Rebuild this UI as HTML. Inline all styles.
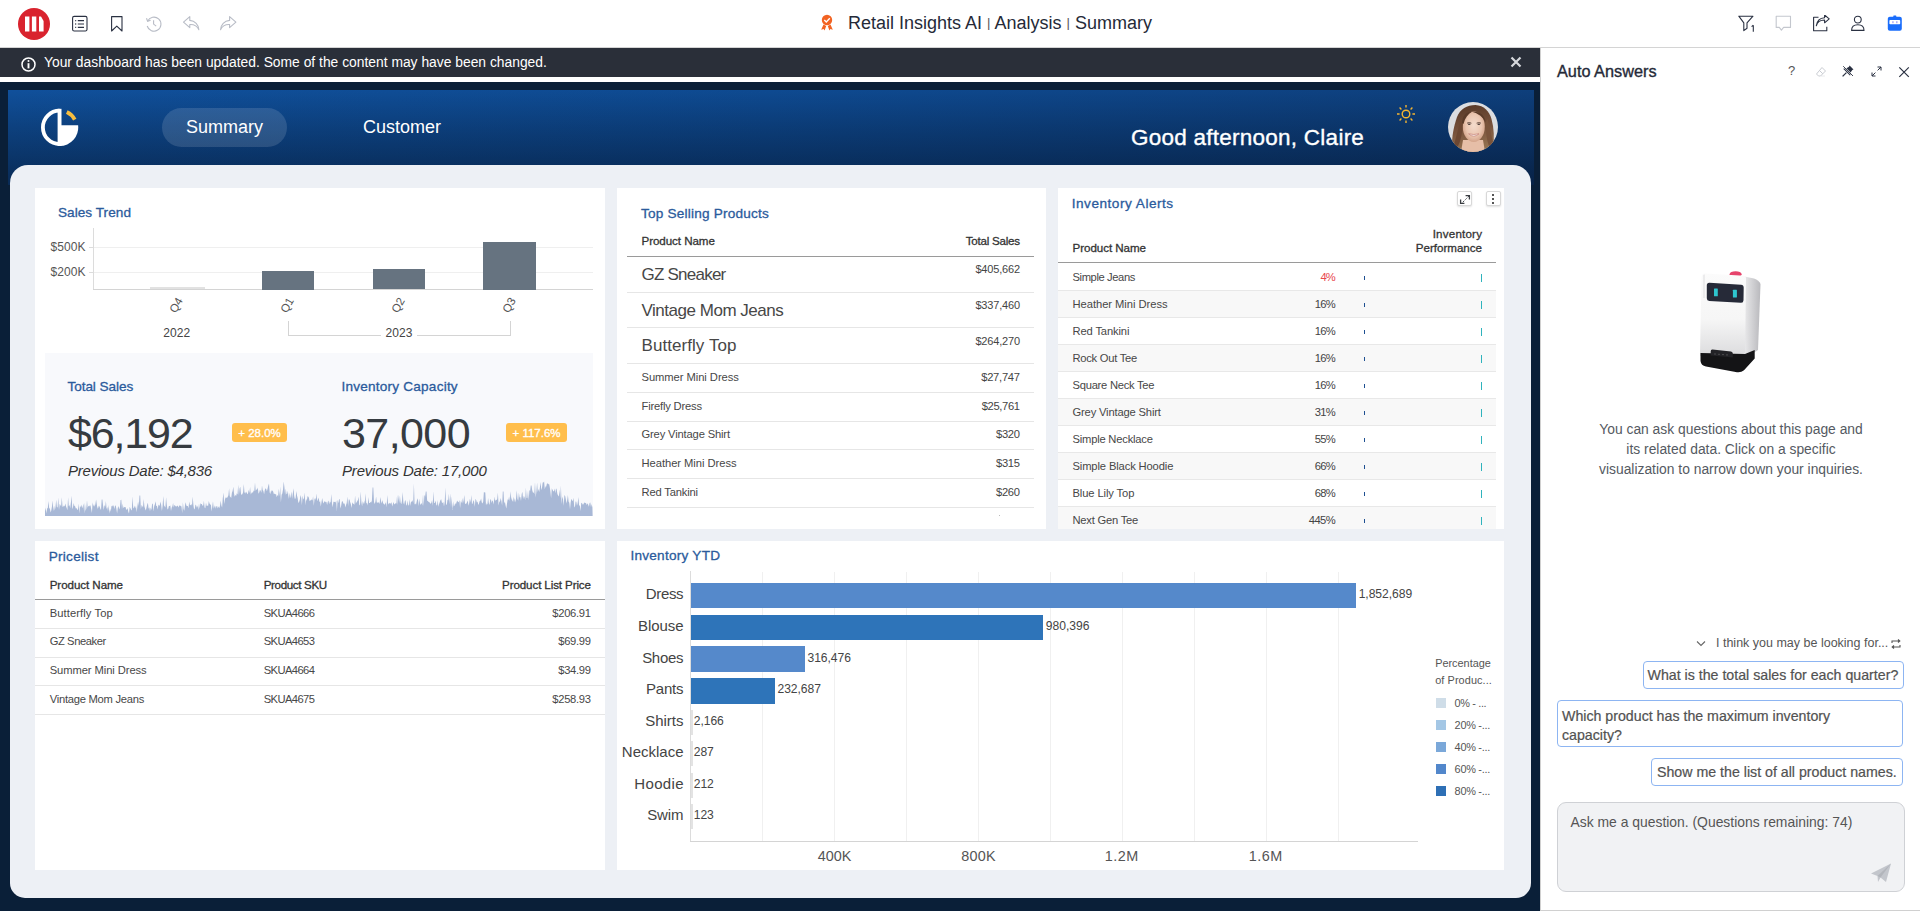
<!DOCTYPE html>
<html><head><meta charset="utf-8">
<style>
*{box-sizing:border-box;margin:0;padding:0}
html,body{width:1920px;height:911px;overflow:hidden;background:#fff;font-family:"Liberation Sans",sans-serif;color:#333}
.abs{position:absolute}
#toolbar{position:absolute;left:0;top:0;width:1920px;height:48px;background:#fff;border-bottom:1px solid #d4d4d4}
#notif{position:absolute;left:0;top:48px;width:1540px;height:29px;background:#2a2f39;color:#fff;font-size:13.85px}
#frame{position:absolute;left:0;top:82px;width:1540px;height:829px;background:#0a1f38}
#hdr{position:absolute;left:8px;top:90px;width:1526px;height:95px;background:linear-gradient(to bottom,rgba(2,8,22,0) 0%,rgba(2,8,22,0.22) 40%,rgba(2,8,22,0.52) 100%),linear-gradient(to right,#10509b 0%,#0e4a91 50%,#0e3f7c 100%)}
#panel{position:absolute;left:10px;top:165px;width:1521px;height:733px;background:#edf0f5;border-radius:18px 18px 15px 15px}
.card{position:absolute;background:#fff;border-radius:2px}
.ttl{position:absolute;font-size:13px;font-weight:700;color:#2b5b9c;white-space:nowrap}
.t{position:absolute;white-space:nowrap}
#rp{position:absolute;left:1540px;top:48px;width:380px;height:863px;background:#fff;border-left:1px solid #d0d0d0;border-bottom:1px solid #d0d0d0}
</style></head><body>
<div id="toolbar">
  <!-- logo -->
  <svg class="abs" style="left:18px;top:8px" width="32" height="32" viewBox="0 0 32 32">
    <circle cx="16" cy="16" r="16" fill="#d9232e"/>
    <rect x="7" y="8.5" width="4.4" height="15" fill="#fff"/>
    <rect x="13.9" y="8.5" width="4.4" height="15" fill="#fff"/>
    <path d="M21 8.5 L23 8.5 L25.6 13 L25.6 23.5 L21 23.5 Z" fill="#fff"/>
  </svg>
  <!-- list icon -->
  <svg class="abs" style="left:71px;top:15px" width="18" height="18" viewBox="0 0 18 18" fill="none" stroke="#2a3142" stroke-width="1.1">
    <rect x="1.6" y="1.4" width="14.4" height="14.6" rx="1.6"/>
    <path d="M6.8 5.6h6.2M6.8 9h6.2M6.8 12.4h6.2"/>
    <path d="M4.2 5.6h1M4.2 9h1M4.2 12.4h1" stroke-width="1.4"/>
  </svg>
  <!-- bookmark -->
  <svg class="abs" style="left:109px;top:15px" width="16" height="18" viewBox="0 0 16 18" fill="none" stroke="#2a3142" stroke-width="1.1" stroke-linejoin="round">
    <path d="M2.6 1.6h10.4v14.4l-5.2-4.9-5.2 4.9z"/>
  </svg>
  <!-- history -->
  <svg class="abs" style="left:145px;top:15px" width="18" height="18" viewBox="0 0 18 18" fill="none" stroke="#b8bcc6" stroke-width="1.1">
    <path d="M2.6 6.2A7 7 0 1 1 2.2 11"/>
    <path d="M1.5 3.2l1.1 3 3-.9"/>
    <path d="M8.6 5.2v3.9l2.6 2"/>
  </svg>
  <!-- undo -->
  <svg class="abs" style="left:182px;top:15px" width="19" height="18" viewBox="0 0 19 18" fill="none" stroke="#b8bcc6" stroke-width="1.1" stroke-linejoin="round">
    <path d="M7.8 1.6 L1.5 7.2 L7.8 12.6 V9.5 C12.2 9.3 15.2 10.8 16.9 14.8 C16.6 9.6 13 5.8 7.8 5.4 Z"/>
  </svg>
  <!-- redo -->
  <svg class="abs" style="left:218px;top:15px" width="19" height="18" viewBox="0 0 19 18" fill="none" stroke="#b8bcc6" stroke-width="1.1" stroke-linejoin="round">
    <path d="M11.6 1.6 L17.9 7.2 L11.6 12.6 V9.5 C7.2 9.3 4.2 10.8 2.5 14.8 C2.8 9.6 6.4 5.8 11.6 5.4 Z"/>
  </svg>
  <!-- title -->
  <svg class="abs" style="left:820px;top:14px" width="14" height="17" viewBox="0 0 14 17">
    <circle cx="7" cy="6" r="5.2" fill="#f26322"/>
    <path d="M4.3 5.9l2 2 3.5-3.6" fill="none" stroke="#fff" stroke-width="1.4"/>
    <path d="M3.5 10.5 L1.2 15.8 L3.6 15 L4.6 16.6 L6.2 12 Z M10.5 10.5 L12.8 15.8 L10.4 15 L9.4 16.6 L7.8 12 Z" fill="#f26322"/>
  </svg>
  <div class="t" style="left:848px;top:13px;font-size:18px;color:#252a38;letter-spacing:0">Retail Insights AI <span style="font-size:13px;position:relative;top:-2px;color:#555">|</span> Analysis <span style="font-size:13px;position:relative;top:-2px;color:#555">|</span> Summary</div>
  <!-- right icons -->
  <svg class="abs" style="left:1737px;top:15px" width="19" height="18" viewBox="0 0 19 18" fill="none" stroke="#2a3142" stroke-width="1.1" stroke-linejoin="round">
    <path d="M1.8 1.2h14.2l-6 6.6v5.4l-3.2 2.4V7.8z"/>
    <path d="M16.3 10.2v6.6M14.6 11.6l1.7-1.4" stroke-width="1.1"/>
  </svg>
  <svg class="abs" style="left:1775px;top:15px" width="17" height="17" viewBox="0 0 17 17" fill="none" stroke="#c4c7ce" stroke-width="1.1" stroke-linejoin="round">
    <path d="M1.2 1.2h14.3v11.2H8.6l-2.2 2.8-2.1-2.8H1.2z"/>
  </svg>
  <svg class="abs" style="left:1812px;top:15px" width="19" height="17" viewBox="0 0 19 17" fill="none" stroke="#2a3142" stroke-width="1.1" stroke-linejoin="round">
    <path d="M6.5 2.2H1.6v13.6h13.2v-4"/>
    <path d="M4.3 10.8c1-3.8 4.2-5.8 8.3-5.8V7.8l4.6-4-4.6-3.8v2.8C8.2 3 5 6 4.3 10.8z"/>
  </svg>
  <svg class="abs" style="left:1850px;top:15px" width="16" height="17" viewBox="0 0 16 17" fill="none" stroke="#2a3142" stroke-width="1.1">
    <circle cx="7.8" cy="4.6" r="3.4"/>
    <path d="M1.6 15.4c0-3.6 2.6-5.6 6.2-5.6s6.2 2 6.2 5.6z" stroke-linejoin="round"/>
  </svg>
  <svg class="abs" style="left:1887px;top:15px" width="16" height="17" viewBox="0 0 16 17">
    <rect x="0.8" y="1.8" width="14" height="14" rx="2" fill="#1a6dfb"/>
    <rect x="6.3" y="0.6" width="3" height="2" rx="0.5" fill="#1a6dfb"/>
    <rect x="2.4" y="5" width="10.8" height="4.2" rx="0.8" fill="#fff"/>
    <rect x="5.4" y="6.2" width="1.1" height="2" fill="#8f8ff5"/>
    <rect x="9.3" y="6.2" width="1.1" height="2" fill="#8f8ff5"/>
  </svg>
</div>

<div id="notif">
  <svg class="abs" style="left:21px;top:8.5px" width="15" height="15" viewBox="0 0 15 15" fill="none" stroke="#fff" stroke-width="1.5">
    <circle cx="7.5" cy="7.5" r="6.5"/>
    <path d="M7.5 6.2v5.2" stroke-width="1.9"/>
    <circle cx="7.5" cy="3.9" r="1" fill="#fff" stroke="none"/>
  </svg>
  <div class="t" style="left:44px;top:6px">Your dashboard has been updated. Some of the content may have been changed.</div>
  <svg class="abs" style="left:1510px;top:8px" width="12" height="12" viewBox="0 0 12 12" stroke="#d6d8dc" stroke-width="2.2">
    <path d="M1.5 1.5l9 9M10.5 1.5l-9 9"/>
  </svg>
</div>

<div id="frame"></div>
<div id="hdr"></div>
<div id="panel"></div>

<!-- header content -->
<svg class="abs" style="left:40px;top:107px" width="40" height="40" viewBox="0 0 40 40">
  <path d="M19.6 3.7 A16.7 16.7 0 0 0 19.6 37.1" fill="none" stroke="#fff" stroke-width="3.8"/>
  <rect x="17.6" y="1.8" width="3.9" height="37.2" fill="#fff"/>
  <path d="M21.5 18.2 H38.1 A18.6 18.6 0 0 1 19.6 39 V18.2 Z" fill="#fff"/>
  <path d="M26.8 5.0 A17 17 0 0 1 34.75 12.7" fill="none" stroke="#f7bd3f" stroke-width="3.8"/>
</svg>
<div class="abs" style="left:162px;top:108px;width:125px;height:39px;border-radius:20px;background:rgba(255,255,255,0.13)"></div>
<div class="t" style="left:186px;top:117px;font-size:18px;color:#fff">Summary</div>
<div class="t" style="left:363px;top:117px;font-size:18px;color:#fff">Customer</div>
<div class="t" style="left:1131px;top:125px;font-size:22.5px;color:#fff;-webkit-text-stroke:0.35px #fff;letter-spacing:0.25px">Good afternoon, Claire</div>
<svg class="abs" style="left:1396px;top:104px" width="20" height="20" viewBox="0 0 20 20" stroke="#f4b532" stroke-width="1.4" fill="none">
  <circle cx="10" cy="10" r="3.8"/>
  <path d="M10 1v2.6M10 16.4V19M1 10h2.6M16.4 10H19M3.6 3.6l1.8 1.8M14.6 14.6l1.8 1.8M3.6 16.4l1.8-1.8M14.6 5.4l1.8-1.8"/>
</svg>
<svg class="abs" style="left:1448px;top:102px" width="50" height="50" viewBox="0 0 50 50">
  <defs><clipPath id="avc"><circle cx="25" cy="25" r="25"/></clipPath>
  <radialGradient id="face" cx="50%" cy="45%" r="55%"><stop offset="0" stop-color="#f4dccd"/><stop offset="0.65" stop-color="#ebc6b0"/><stop offset="1" stop-color="#d3a389"/></radialGradient>
  <linearGradient id="hair" x1="0" y1="0" x2="0.2" y2="1"><stop offset="0" stop-color="#553726"/><stop offset="0.55" stop-color="#76503a"/><stop offset="1" stop-color="#93704f"/></linearGradient></defs>
  <g clip-path="url(#avc)">
    <rect width="50" height="50" fill="#dcdde0"/>
    <path d="M4.5 46 C3 36 6 24 9 15 C12 7 19 3 27.5 3 C36 3.5 41 9 43.5 17 C46 26 46.5 36 45 46 L36 50 L14 50 Z" fill="url(#hair)"/>
    <path d="M15 38 L35 38 L37 50 L13 50 Z" fill="#e6bea7"/>
    <ellipse cx="25.8" cy="24.8" rx="11" ry="15.3" fill="url(#face)"/>
    <path d="M14 21 C14.5 13 19 9.5 24 9.8 C20 12 17 16 15.5 22 Z" fill="#5a3b29"/>
    <path d="M24 9.8 C31 9 36.5 12 37.5 20 C35 15 30 11.5 24 9.8 Z" fill="#5a3b29"/>
    <path d="M14.6 22 C14 31 13.5 38 9 46 L5 46 C8 36 10 27 12.5 18 Z" fill="#6c4732"/>
    <path d="M37 21 C38.5 30 38 38 42 46 L46 45 C44 36 42 26 39.5 17 Z" fill="#7a543b"/>
    <path d="M19 21.2 q2.2 -1.3 4.4 0" stroke="#6a5247" stroke-width="1" fill="none"/>
    <path d="M28.6 21.2 q2.2 -1.3 4.4 0" stroke="#6a5247" stroke-width="1" fill="none"/>
    <ellipse cx="21.2" cy="22.3" rx="1.4" ry="0.8" fill="#4a3a36"/>
    <ellipse cx="30.8" cy="22.3" rx="1.4" ry="0.8" fill="#4a3a36"/>
    <path d="M20.6 31.8 Q25.8 36.6 31 31.8 Q25.8 33.2 20.6 31.8 Z" fill="#fbf6f2" stroke="#c47f77" stroke-width="0.7"/>
  </g>
</svg>


<!--CARDS-->
<div class="abs" style="left:35px;top:188px;width:570px;height:341px;background:#fff;"></div>
<div class="abs" style="left:617px;top:188px;width:429px;height:341px;background:#fff;"></div>
<div class="abs" style="left:1058px;top:188px;width:446px;height:341px;background:#fff;"></div>
<div class="abs" style="left:35px;top:541px;width:570px;height:329px;background:#fff;"></div>
<div class="abs" style="left:617px;top:541px;width:887px;height:329px;background:#fff;"></div>
<div class="t" id="t1" style="top:206.49px;font-size:13.6px;line-height:13.6px;-webkit-text-stroke:0.3px currentColor;color:#2b5b9c;left:58px;letter-spacing:0.041px;">Sales Trend</div>
<div class="abs" style="left:93px;top:228px;width:1px;height:62px;background:#dcdcdc;"></div>
<div class="abs" style="left:93px;top:289px;width:500px;height:1px;background:#d4d4d4;"></div>
<div class="abs" style="left:94px;top:247px;width:499px;height:1px;background:#efefef;"></div>
<div class="abs" style="left:94px;top:272px;width:499px;height:1px;background:#efefef;"></div>
<div class="abs" style="left:89px;top:247px;width:4px;height:1px;background:#dcdcdc;"></div>
<div class="abs" style="left:89px;top:272px;width:4px;height:1px;background:#dcdcdc;"></div>
<div class="t" id="t2" style="top:240.54px;font-size:12px;line-height:12px;color:#555;right:1834.5px;letter-spacing:0.059px;margin-right:-0.059px;">$500K</div>
<div class="t" id="t3" style="top:265.54px;font-size:12px;line-height:12px;color:#555;right:1834.5px;letter-spacing:0.059px;margin-right:-0.059px;">$200K</div>
<div class="abs" style="left:150px;top:287px;width:55px;height:2px;background:#e2e2e2;"></div>
<div class="abs" style="left:262px;top:270.5px;width:52px;height:19px;background:#667380;"></div>
<div class="abs" style="left:373px;top:268.7px;width:52px;height:20.8px;background:#667380;"></div>
<div class="abs" style="left:483px;top:241.5px;width:53px;height:48px;background:#667380;"></div>
<div class="t" style="left:176.4px;top:304.7px;font-size:11.5px;line-height:12px;color:#555;transform:translate(-50%,-50%) rotate(-60deg)">Q4</div>
<div class="t" style="left:287px;top:304.7px;font-size:11.5px;line-height:12px;color:#555;transform:translate(-50%,-50%) rotate(-60deg)">Q1</div>
<div class="t" style="left:398px;top:304.7px;font-size:11.5px;line-height:12px;color:#555;transform:translate(-50%,-50%) rotate(-60deg)">Q2</div>
<div class="t" style="left:509px;top:304.7px;font-size:11.5px;line-height:12px;color:#555;transform:translate(-50%,-50%) rotate(-60deg)">Q3</div>
<div class="t" id="t4" style="top:326.84px;font-size:12px;line-height:12px;color:#444;left:176.7px;transform:translateX(-50%);letter-spacing:0.074px;margin-left:0.037px;">2022</div>
<div class="t" id="t5" style="top:326.84px;font-size:12px;line-height:12px;color:#444;left:399px;transform:translateX(-50%);letter-spacing:0.074px;margin-left:0.037px;">2023</div>
<div class="abs" style="left:287.5px;top:321px;width:1px;height:14px;background:#d4d4d4;"></div>
<div class="abs" style="left:509.5px;top:321px;width:1px;height:14px;background:#d4d4d4;"></div>
<div class="abs" style="left:287.5px;top:334.5px;width:93px;height:1px;background:#d4d4d4;"></div>
<div class="abs" style="left:417px;top:334.5px;width:93.5px;height:1px;background:#d4d4d4;"></div>
<div class="abs" style="left:45px;top:353px;width:548px;height:163px;background:#f8f9fc;"></div>
<svg class="abs" style="left:0;top:0" width="600" height="530"><path d="M45,516 L45.0,511.2 L45.7,507.6 L46.4,513.5 L47.1,508.4 L47.8,507.9 L48.5,500.9 L49.2,508.2 L49.9,508.4 L50.6,512.5 L51.3,510.2 L52.0,506.2 L52.7,500.6 L53.4,511.3 L54.1,505.7 L54.8,510.4 L55.5,507.1 L56.2,499.7 L56.9,507.0 L57.6,507.5 L58.3,497.4 L59.0,510.1 L59.7,504.0 L60.4,505.0 L61.1,506.5 L61.8,497.2 L62.5,506.8 L63.2,506.7 L63.9,505.6 L64.6,506.5 L65.3,503.4 L66.0,506.2 L66.7,507.9 L67.4,510.3 L68.1,497.2 L68.8,506.2 L69.5,505.0 L70.2,508.2 L70.9,502.4 L71.6,495.8 L72.3,509.2 L73.0,506.9 L73.7,502.9 L74.4,505.9 L75.1,506.3 L75.8,508.5 L76.5,508.0 L77.2,509.6 L77.9,510.0 L78.6,503.4 L79.3,513.5 L80.0,505.5 L80.7,507.4 L81.4,504.5 L82.1,508.3 L82.8,506.6 L83.5,503.5 L84.2,513.5 L84.9,502.8 L85.6,510.9 L86.3,508.5 L87.0,500.3 L87.7,507.7 L88.4,505.7 L89.1,506.5 L89.8,505.6 L90.5,505.5 L91.2,508.9 L91.9,512.9 L92.6,502.2 L93.3,506.5 L94.0,504.0 L94.7,506.7 L95.4,503.9 L96.1,499.4 L96.8,504.2 L97.5,509.2 L98.2,505.4 L98.9,508.2 L99.6,505.6 L100.3,508.8 L101.0,509.9 L101.7,499.5 L102.4,499.5 L103.1,505.7 L103.8,510.0 L104.5,504.9 L105.2,506.8 L105.9,501.0 L106.6,508.9 L107.3,507.1 L108.0,511.0 L108.7,505.1 L109.4,513.5 L110.1,508.7 L110.8,511.7 L111.5,505.7 L112.2,506.6 L112.9,505.2 L113.6,505.8 L114.3,508.9 L115.0,505.7 L115.7,505.5 L116.4,508.7 L117.1,513.5 L117.8,507.7 L118.5,506.0 L119.2,509.4 L119.9,507.4 L120.6,500.0 L121.3,499.7 L122.0,509.2 L122.7,503.6 L123.4,507.9 L124.1,507.3 L124.8,507.0 L125.5,506.9 L126.2,509.6 L126.9,509.7 L127.6,508.0 L128.3,511.7 L129.0,513.5 L129.7,506.7 L130.4,508.2 L131.1,509.8 L131.8,510.4 L132.5,496.2 L133.2,507.5 L133.9,508.4 L134.6,505.5 L135.3,508.4 L136.0,505.7 L136.7,512.3 L137.4,506.2 L138.1,501.5 L138.8,506.1 L139.5,495.5 L140.2,495.5 L140.9,509.0 L141.6,505.1 L142.3,505.9 L143.0,507.6 L143.7,499.1 L144.4,506.2 L145.1,508.8 L145.8,510.6 L146.5,507.4 L147.2,504.6 L147.9,502.8 L148.6,508.8 L149.3,507.3 L150.0,511.2 L150.7,507.6 L151.4,510.1 L152.1,504.1 L152.8,503.5 L153.5,511.6 L154.2,506.1 L154.9,504.3 L155.6,501.2 L156.3,505.9 L157.0,506.0 L157.7,509.6 L158.4,504.4 L159.1,505.7 L159.8,505.3 L160.5,501.5 L161.2,504.9 L161.9,511.1 L162.6,505.7 L163.3,496.0 L164.0,505.3 L164.7,506.5 L165.4,507.6 L166.1,497.2 L166.8,504.8 L167.5,509.5 L168.2,508.7 L168.9,505.9 L169.6,505.9 L170.3,505.4 L171.0,510.9 L171.7,507.4 L172.4,506.2 L173.1,503.0 L173.8,507.4 L174.5,504.8 L175.2,505.7 L175.9,506.6 L176.6,506.6 L177.3,505.6 L178.0,506.2 L178.7,507.6 L179.4,505.0 L180.1,506.3 L180.8,505.4 L181.5,506.7 L182.2,513.0 L182.9,502.3 L183.6,508.9 L184.3,510.8 L185.0,505.2 L185.7,502.3 L186.4,505.7 L187.1,505.9 L187.8,506.1 L188.5,508.2 L189.2,501.5 L189.9,505.0 L190.6,505.2 L191.3,504.0 L192.0,505.8 L192.7,496.5 L193.4,505.1 L194.1,509.4 L194.8,508.6 L195.5,504.5 L196.2,505.5 L196.9,507.7 L197.6,505.4 L198.3,510.0 L199.0,503.6 L199.7,508.4 L200.4,503.2 L201.1,504.0 L201.8,503.9 L202.5,505.8 L203.2,505.4 L203.9,500.7 L204.6,507.4 L205.3,508.3 L206.0,502.7 L206.7,505.9 L207.4,505.4 L208.1,505.9 L208.8,500.9 L209.5,503.6 L210.2,504.4 L210.9,504.8 L211.6,511.5 L212.3,506.0 L213.0,501.3 L213.7,508.8 L214.4,505.2 L215.1,508.7 L215.8,506.2 L216.5,506.1 L217.2,508.5 L217.9,506.1 L218.6,507.2 L219.3,507.9 L220.0,505.7 L220.7,500.4 L221.4,505.5 L222.1,507.5 L222.8,497.9 L223.5,492.4 L224.2,504.1 L224.9,499.6 L225.6,497.5 L226.3,497.5 L227.0,498.0 L227.7,496.7 L228.4,495.2 L229.1,488.3 L229.8,496.2 L230.5,497.0 L231.2,498.0 L231.9,492.7 L232.6,490.9 L233.3,486.8 L234.0,493.3 L234.7,496.8 L235.4,494.8 L236.1,496.1 L236.8,493.3 L237.5,494.6 L238.2,484.7 L238.9,495.1 L239.6,488.6 L240.3,486.7 L241.0,493.7 L241.7,494.9 L242.4,493.9 L243.1,492.2 L243.8,483.9 L244.5,493.1 L245.2,492.1 L245.9,493.8 L246.6,491.5 L247.3,494.2 L248.0,493.5 L248.7,489.7 L249.4,492.9 L250.1,487.0 L250.8,494.5 L251.5,493.1 L252.2,492.0 L252.9,492.9 L253.6,490.4 L254.3,491.1 L255.0,482.5 L255.7,490.8 L256.4,489.4 L257.1,489.6 L257.8,487.4 L258.5,493.7 L259.2,492.5 L259.9,490.0 L260.6,490.5 L261.3,492.8 L262.0,485.5 L262.7,490.1 L263.4,490.9 L264.1,494.3 L264.8,490.0 L265.5,488.3 L266.2,489.0 L266.9,491.2 L267.6,488.5 L268.3,485.5 L269.0,483.6 L269.7,492.4 L270.4,494.1 L271.1,490.1 L271.8,491.7 L272.5,490.3 L273.2,491.8 L273.9,494.3 L274.6,493.4 L275.3,494.6 L276.0,493.7 L276.7,497.2 L277.4,494.8 L278.1,496.5 L278.8,488.6 L279.5,496.5 L280.2,486.5 L280.9,502.2 L281.6,494.7 L282.3,493.5 L283.0,489.4 L283.7,481.5 L284.4,487.1 L285.1,495.1 L285.8,488.4 L286.5,494.3 L287.2,493.8 L287.9,490.7 L288.6,498.9 L289.3,492.8 L290.0,498.4 L290.7,496.1 L291.4,491.5 L292.1,498.7 L292.8,493.5 L293.5,488.2 L294.2,495.9 L294.9,499.0 L295.6,498.3 L296.3,491.0 L297.0,495.5 L297.7,498.2 L298.4,502.9 L299.1,502.0 L299.8,499.7 L300.5,495.1 L301.2,497.8 L301.9,505.0 L302.6,495.5 L303.3,499.6 L304.0,498.2 L304.7,492.5 L305.4,505.2 L306.1,498.7 L306.8,501.1 L307.5,496.2 L308.2,496.4 L308.9,497.7 L309.6,501.3 L310.3,500.2 L311.0,500.4 L311.7,499.3 L312.4,500.6 L313.1,496.2 L313.8,505.8 L314.5,498.9 L315.2,498.1 L315.9,500.1 L316.6,493.6 L317.3,501.3 L318.0,499.6 L318.7,497.5 L319.4,502.3 L320.1,501.0 L320.8,506.6 L321.5,502.1 L322.2,498.0 L322.9,501.7 L323.6,503.6 L324.3,501.6 L325.0,501.2 L325.7,502.2 L326.4,501.7 L327.1,504.9 L327.8,501.7 L328.5,500.6 L329.2,504.3 L329.9,501.4 L330.6,502.7 L331.3,494.0 L332.0,503.2 L332.7,507.3 L333.4,501.7 L334.1,501.7 L334.8,502.1 L335.5,502.4 L336.2,500.6 L336.9,510.9 L337.6,499.4 L338.3,503.3 L339.0,499.6 L339.7,499.1 L340.4,508.6 L341.1,506.0 L341.8,501.7 L342.5,501.1 L343.2,502.7 L343.9,504.0 L344.6,503.2 L345.3,507.6 L346.0,505.0 L346.7,503.0 L347.4,496.6 L348.1,506.1 L348.8,499.5 L349.5,499.6 L350.2,502.3 L350.9,504.3 L351.6,508.0 L352.3,502.2 L353.0,503.5 L353.7,504.1 L354.4,504.7 L355.1,495.5 L355.8,503.7 L356.5,502.3 L357.2,501.3 L357.9,500.1 L358.6,496.7 L359.3,505.6 L360.0,504.5 L360.7,491.5 L361.4,502.3 L362.1,506.2 L362.8,501.1 L363.5,504.3 L364.2,500.3 L364.9,504.0 L365.6,493.3 L366.3,503.6 L367.0,502.8 L367.7,505.4 L368.4,497.0 L369.1,503.0 L369.8,503.1 L370.5,502.1 L371.2,502.4 L371.9,500.6 L372.6,487.5 L373.3,487.5 L374.0,502.0 L374.7,504.0 L375.4,501.7 L376.1,496.4 L376.8,502.4 L377.5,502.5 L378.2,502.9 L378.9,501.8 L379.6,504.2 L380.3,497.1 L381.0,501.0 L381.7,503.6 L382.4,500.0 L383.1,502.9 L383.8,503.9 L384.5,504.7 L385.2,503.8 L385.9,502.3 L386.6,507.2 L387.3,495.0 L388.0,502.8 L388.7,504.4 L389.4,502.8 L390.1,503.7 L390.8,503.3 L391.5,502.2 L392.2,506.6 L392.9,503.9 L393.6,502.0 L394.3,504.6 L395.0,503.8 L395.7,503.3 L396.4,503.4 L397.1,495.1 L397.8,505.0 L398.5,494.5 L399.2,502.9 L399.9,495.4 L400.6,502.4 L401.3,504.2 L402.0,500.7 L402.7,491.9 L403.4,502.5 L404.1,504.7 L404.8,501.3 L405.5,500.0 L406.2,504.6 L406.9,505.7 L407.6,500.6 L408.3,505.3 L409.0,505.6 L409.7,499.1 L410.4,506.0 L411.1,501.1 L411.8,502.3 L412.5,500.0 L413.2,503.1 L413.9,483.5 L414.6,504.6 L415.3,503.5 L416.0,504.7 L416.7,501.6 L417.4,498.2 L418.1,500.4 L418.8,506.0 L419.5,498.5 L420.2,504.4 L420.9,504.4 L421.6,502.8 L422.3,505.4 L423.0,494.6 L423.7,505.9 L424.4,494.8 L425.1,496.8 L425.8,491.5 L426.5,491.5 L427.2,501.1 L427.9,500.8 L428.6,502.0 L429.3,502.2 L430.0,502.7 L430.7,504.1 L431.4,502.4 L432.1,500.1 L432.8,505.7 L433.5,491.2 L434.2,502.9 L434.9,503.1 L435.6,500.6 L436.3,504.7 L437.0,505.8 L437.7,499.9 L438.4,506.7 L439.1,504.1 L439.8,502.0 L440.5,500.1 L441.2,499.2 L441.9,502.6 L442.6,503.1 L443.3,501.9 L444.0,506.4 L444.7,502.1 L445.4,487.5 L446.1,504.2 L446.8,504.9 L447.5,499.6 L448.2,500.6 L448.9,493.8 L449.6,504.2 L450.3,493.2 L451.0,507.2 L451.7,496.3 L452.4,510.0 L453.1,501.2 L453.8,506.5 L454.5,505.6 L455.2,502.9 L455.9,504.6 L456.6,502.1 L457.3,500.5 L458.0,501.9 L458.7,502.2 L459.4,500.1 L460.1,507.9 L460.8,500.9 L461.5,503.0 L462.2,498.0 L462.9,503.5 L463.6,500.3 L464.3,495.1 L465.0,503.4 L465.7,504.1 L466.4,503.5 L467.1,502.0 L467.8,500.5 L468.5,505.8 L469.2,503.0 L469.9,498.8 L470.6,502.6 L471.3,495.0 L472.0,504.2 L472.7,503.3 L473.4,500.0 L474.1,501.7 L474.8,506.7 L475.5,498.7 L476.2,500.0 L476.9,502.5 L477.6,501.5 L478.3,505.0 L479.0,503.4 L479.7,501.0 L480.4,500.8 L481.1,498.6 L481.8,502.6 L482.5,503.5 L483.2,501.4 L483.9,491.8 L484.6,492.5 L485.3,492.5 L486.0,505.6 L486.7,503.3 L487.4,504.4 L488.1,498.0 L488.8,502.9 L489.5,504.9 L490.2,500.0 L490.9,499.1 L491.6,502.9 L492.3,500.3 L493.0,501.5 L493.7,504.5 L494.4,496.5 L495.1,501.0 L495.8,499.8 L496.5,500.0 L497.2,499.3 L497.9,492.5 L498.6,505.4 L499.3,501.7 L500.0,501.5 L500.7,497.9 L501.4,501.1 L502.1,505.5 L502.8,491.5 L503.5,491.5 L504.2,503.4 L504.9,501.8 L505.6,505.4 L506.3,508.6 L507.0,503.5 L507.7,499.2 L508.4,500.0 L509.1,496.4 L509.8,501.3 L510.5,491.3 L511.2,497.7 L511.9,499.9 L512.6,501.7 L513.3,496.5 L514.0,502.5 L514.7,498.1 L515.4,502.6 L516.1,497.7 L516.8,490.3 L517.5,498.7 L518.2,500.8 L518.9,492.7 L519.6,497.6 L520.3,496.9 L521.0,501.1 L521.7,494.0 L522.4,491.8 L523.1,499.0 L523.8,496.0 L524.5,497.1 L525.2,500.2 L525.9,487.6 L526.6,497.7 L527.3,498.2 L528.0,490.6 L528.7,500.2 L529.4,489.9 L530.1,491.1 L530.8,485.5 L531.5,485.5 L532.2,490.3 L532.9,492.4 L533.6,492.5 L534.3,494.1 L535.0,482.0 L535.7,497.6 L536.4,491.4 L537.1,482.5 L537.8,492.0 L538.5,488.7 L539.2,491.9 L539.9,487.2 L540.6,482.0 L541.3,490.1 L542.0,487.8 L542.7,482.5 L543.4,482.5 L544.1,481.5 L544.8,489.2 L545.5,486.5 L546.2,486.6 L546.9,483.7 L547.6,483.2 L548.3,484.4 L549.0,483.5 L549.7,486.7 L550.4,491.5 L551.1,498.2 L551.8,488.3 L552.5,489.8 L553.2,490.9 L553.9,491.4 L554.6,488.5 L555.3,493.2 L556.0,488.3 L556.7,489.4 L557.4,494.1 L558.1,495.6 L558.8,496.6 L559.5,489.6 L560.2,498.5 L560.9,485.5 L561.6,503.9 L562.3,496.4 L563.0,499.1 L563.7,505.8 L564.4,495.2 L565.1,495.7 L565.8,498.9 L566.5,503.4 L567.2,500.0 L567.9,495.1 L568.6,501.4 L569.3,502.7 L570.0,509.3 L570.7,502.3 L571.4,498.8 L572.1,500.2 L572.8,501.3 L573.5,497.7 L574.2,506.3 L574.9,507.4 L575.6,501.4 L576.3,501.7 L577.0,505.7 L577.7,503.1 L578.4,496.9 L579.1,505.6 L579.8,505.6 L580.5,510.9 L581.2,503.2 L581.9,502.8 L582.6,504.4 L583.3,504.6 L584.0,503.0 L584.7,502.6 L585.4,503.1 L586.1,503.2 L586.8,505.1 L587.5,503.2 L588.2,504.7 L588.9,506.8 L589.6,503.0 L590.3,502.6 L591.0,507.3 L591.7,504.1 L592.4,507.5 L592.6,516 Z" fill="#a8b8d6"/></svg>
<div class="t" id="t6" style="top:380.09px;font-size:13.6px;line-height:13.6px;-webkit-text-stroke:0.3px currentColor;color:#2b5b9c;left:67.5px;letter-spacing:-0.082px;">Total Sales</div>
<div class="t" id="t7" style="top:380.09px;font-size:13.6px;line-height:13.6px;-webkit-text-stroke:0.3px currentColor;color:#2b5b9c;left:341.5px;letter-spacing:0.211px;">Inventory Capacity</div>
<div class="t" id="t8" style="top:412.00px;font-size:43px;line-height:43px;color:#363b40;left:68px;letter-spacing:-1.189px;">$6,192</div>
<div class="t" id="t9" style="top:412.00px;font-size:43px;line-height:43px;color:#363b40;left:342px;letter-spacing:-0.589px;">37,000</div>
<div class="abs" style="left:232px;top:422.5px;width:55px;height:19px;background:#ffbe4c;border-radius:3px;color:#fff;font-size:11.5px;-webkit-text-stroke:0.3px #fff;line-height:21px;text-align:center">+ 28.0%</div>
<div class="abs" style="left:506px;top:422.5px;width:61px;height:19px;background:#ffbe4c;border-radius:3px;color:#fff;font-size:11.5px;-webkit-text-stroke:0.3px #fff;line-height:21px;text-align:center">+ 117.6%</div>
<div class="t" id="t10" style="top:463.30px;font-size:15px;line-height:15px;color:#333;font-style:italic;left:68px;letter-spacing:-0.211px;">Previous Date: $4,836</div>
<div class="t" id="t11" style="top:463.30px;font-size:15px;line-height:15px;color:#333;font-style:italic;left:342px;letter-spacing:-0.183px;">Previous Date: 17,000</div>
<div class="t" id="t12" style="top:206.69px;font-size:13.6px;line-height:13.6px;-webkit-text-stroke:0.3px currentColor;color:#2b5b9c;left:641px;letter-spacing:0.203px;">Top Selling Products</div>
<div class="t" id="t13" style="top:235.18px;font-size:11.6px;line-height:11.6px;-webkit-text-stroke:0.3px currentColor;color:#333;left:641.5px;letter-spacing:-0.067px;">Product Name</div>
<div class="t" id="t14" style="top:235.18px;font-size:11.6px;line-height:11.6px;-webkit-text-stroke:0.3px currentColor;color:#333;right:900px;letter-spacing:-0.247px;margin-right:0.247px;">Total Sales</div>
<div class="abs" style="left:627px;top:256px;width:407px;height:1px;background:#9a9a9a;"></div>
<div class="t" id="t15" style="top:265.91px;font-size:17px;line-height:17px;color:#474747;left:641.5px;letter-spacing:-0.766px;">GZ Sneaker</div>
<div class="t" id="t16" style="top:264.39px;font-size:11px;line-height:11px;color:#444;right:900px;letter-spacing:-0.186px;margin-right:0.186px;">$405,662</div>
<div class="abs" style="left:627px;top:292px;width:407px;height:1px;background:#e6e6e6;"></div>
<div class="t" id="t17" style="top:301.61px;font-size:17px;line-height:17px;color:#474747;left:641.5px;letter-spacing:-0.479px;">Vintage Mom Jeans</div>
<div class="t" id="t18" style="top:300.09px;font-size:11px;line-height:11px;color:#444;right:900px;letter-spacing:-0.186px;margin-right:0.186px;">$337,460</div>
<div class="abs" style="left:627px;top:327.3px;width:407px;height:1px;background:#e6e6e6;"></div>
<div class="t" id="t19" style="top:337.11px;font-size:17px;line-height:17px;color:#474747;left:641.5px;letter-spacing:0.062px;">Butterfly Top</div>
<div class="t" id="t20" style="top:335.59px;font-size:11px;line-height:11px;color:#444;right:900px;letter-spacing:-0.186px;margin-right:0.186px;">$264,270</div>
<div class="abs" style="left:627px;top:363.3px;width:407px;height:1px;background:#e6e6e6;"></div>
<div class="t" id="t21" style="top:371.52px;font-size:11.2px;line-height:11.2px;color:#474747;left:641.5px;letter-spacing:-0.054px;">Summer Mini Dress</div>
<div class="t" id="t22" style="top:371.52px;font-size:11.2px;line-height:11.2px;color:#444;right:900px;letter-spacing:-0.279px;margin-right:0.279px;">$27,747</div>
<div class="abs" style="left:627px;top:392.3px;width:407px;height:1px;background:#e6e6e6;"></div>
<div class="t" id="t23" style="top:400.52px;font-size:11.2px;line-height:11.2px;color:#474747;left:641.5px;letter-spacing:-0.191px;">Firefly Dress</div>
<div class="t" id="t24" style="top:400.52px;font-size:11.2px;line-height:11.2px;color:#444;right:900px;letter-spacing:-0.350px;margin-right:0.350px;">$25,761</div>
<div class="abs" style="left:627px;top:420.5px;width:407px;height:1px;background:#e6e6e6;"></div>
<div class="t" id="t25" style="top:428.82px;font-size:11.2px;line-height:11.2px;color:#474747;left:641.5px;letter-spacing:-0.157px;">Grey Vintage Shirt</div>
<div class="t" id="t26" style="top:428.82px;font-size:11.2px;line-height:11.2px;color:#444;right:900px;letter-spacing:-0.273px;margin-right:0.273px;">$320</div>
<div class="abs" style="left:627px;top:449px;width:407px;height:1px;background:#e6e6e6;"></div>
<div class="t" id="t27" style="top:457.72px;font-size:11.2px;line-height:11.2px;color:#474747;left:641.5px;letter-spacing:-0.042px;">Heather Mini Dress</div>
<div class="t" id="t28" style="top:457.72px;font-size:11.2px;line-height:11.2px;color:#444;right:900px;letter-spacing:-0.273px;margin-right:0.273px;">$315</div>
<div class="abs" style="left:627px;top:478.3px;width:407px;height:1px;background:#e6e6e6;"></div>
<div class="t" id="t29" style="top:486.52px;font-size:11.2px;line-height:11.2px;color:#474747;left:641.5px;letter-spacing:-0.179px;">Red Tankini</div>
<div class="t" id="t30" style="top:486.52px;font-size:11.2px;line-height:11.2px;color:#444;right:900px;letter-spacing:-0.273px;margin-right:0.273px;">$260</div>
<div class="abs" style="left:627px;top:507.2px;width:407px;height:1px;background:#e6e6e6;"></div>
<div class="abs" style="left:998.5px;top:514.5px;width:1px;height:1px;background:#bbb;"></div>
<div class="t" id="t31" style="top:197.19px;font-size:13.6px;line-height:13.6px;-webkit-text-stroke:0.3px currentColor;color:#2b5b9c;left:1071.7px;letter-spacing:0.519px;">Inventory Alerts</div>
<div class="abs" style="left:1456.5px;top:190.5px;width:15px;height:15px;border:1px solid #d8d8d8;border-radius:2px;box-shadow:0 1px 2px rgba(0,0,0,.12);background:#fff"></div>
<svg class="abs" style="left:1456.5px;top:190.5px" width="15" height="15" viewBox="0 0 15 15" fill="none" stroke="#3a3d42"><path d="M8.6 4.6H12.4V8.4 M3.6 8.6V12.4H7.4" stroke-width="1.3"/><path d="M12 5L4 13" stroke-width="1" stroke-dasharray="1.3 1.1"/></svg>
<div class="abs" style="left:1486px;top:191px;width:14.5px;height:15px;border:1px solid #d8d8d8;border-radius:2px;box-shadow:0 1px 2px rgba(0,0,0,.12);background:#fff"></div>
<div class="abs" style="left:1492px;top:194px;width:2px;height:2px;background:#555;"></div>
<div class="abs" style="left:1492px;top:198px;width:2px;height:2px;background:#555;"></div>
<div class="abs" style="left:1492px;top:202px;width:2px;height:2px;background:#555;"></div>
<div class="t" id="t32" style="top:242.18px;font-size:11.6px;line-height:11.6px;-webkit-text-stroke:0.3px currentColor;color:#333;left:1072.5px;letter-spacing:-0.051px;">Product Name</div>
<div class="t" id="t33" style="top:228.48px;font-size:11.6px;line-height:11.6px;-webkit-text-stroke:0.3px currentColor;color:#333;right:438px;letter-spacing:0.200px;margin-right:-0.200px;">Inventory</div>
<div class="t" id="t34" style="top:242.18px;font-size:11.6px;line-height:11.6px;-webkit-text-stroke:0.3px currentColor;color:#333;right:438px;letter-spacing:-0.011px;margin-right:0.011px;">Performance</div>
<div class="abs" style="left:1058px;top:262px;width:438px;height:1px;background:#9a9a9a;"></div>
<div class="abs" style="left:1058px;top:290px;width:438px;height:1px;background:#e8e8e8;"></div>
<div class="t" id="t35" style="top:272.22px;font-size:11.2px;line-height:11.2px;color:#474747;left:1072.5px;letter-spacing:-0.389px;">Simple Jeans</div>
<div class="t" id="t36" style="top:272.22px;font-size:11.2px;line-height:11.2px;color:#e8474c;right:584.3px;letter-spacing:-0.836px;margin-right:0.836px;">4%</div>
<div class="abs" style="left:1363.7px;top:275.5px;width:1.3px;height:4.8px;background:#1d4f91;"></div>
<div class="abs" style="left:1480.7px;top:274.0px;width:1.5px;height:8px;background:#2fb3bd;"></div>
<div class="abs" style="left:1058px;top:291px;width:438px;height:27px;background:#f8f8f8;"></div>
<div class="abs" style="left:1058px;top:317px;width:438px;height:1px;background:#e8e8e8;"></div>
<div class="t" id="t37" style="top:299.22px;font-size:11.2px;line-height:11.2px;color:#474747;left:1072.5px;letter-spacing:-0.042px;">Heather Mini Dress</div>
<div class="t" id="t38" style="top:299.22px;font-size:11.2px;line-height:11.2px;color:#444;right:584.3px;letter-spacing:-0.719px;margin-right:0.719px;">16%</div>
<div class="abs" style="left:1363.7px;top:302.5px;width:1.3px;height:4.8px;background:#1d4f91;"></div>
<div class="abs" style="left:1480.7px;top:301.0px;width:1.5px;height:8px;background:#2fb3bd;"></div>
<div class="abs" style="left:1058px;top:344px;width:438px;height:1px;background:#e8e8e8;"></div>
<div class="t" id="t39" style="top:326.22px;font-size:11.2px;line-height:11.2px;color:#474747;left:1072.5px;letter-spacing:-0.138px;">Red Tankini</div>
<div class="t" id="t40" style="top:326.22px;font-size:11.2px;line-height:11.2px;color:#444;right:584.3px;letter-spacing:-0.719px;margin-right:0.719px;">16%</div>
<div class="abs" style="left:1363.7px;top:329.5px;width:1.3px;height:4.8px;background:#1d4f91;"></div>
<div class="abs" style="left:1480.7px;top:328.0px;width:1.5px;height:8px;background:#2fb3bd;"></div>
<div class="abs" style="left:1058px;top:345px;width:438px;height:27px;background:#f8f8f8;"></div>
<div class="abs" style="left:1058px;top:371px;width:438px;height:1px;background:#e8e8e8;"></div>
<div class="t" id="t41" style="top:353.22px;font-size:11.2px;line-height:11.2px;color:#474747;left:1072.5px;letter-spacing:-0.257px;">Rock Out Tee</div>
<div class="t" id="t42" style="top:353.22px;font-size:11.2px;line-height:11.2px;color:#444;right:584.3px;letter-spacing:-0.719px;margin-right:0.719px;">16%</div>
<div class="abs" style="left:1363.7px;top:356.5px;width:1.3px;height:4.8px;background:#1d4f91;"></div>
<div class="abs" style="left:1480.7px;top:355.0px;width:1.5px;height:8px;background:#2fb3bd;"></div>
<div class="abs" style="left:1058px;top:398px;width:438px;height:1px;background:#e8e8e8;"></div>
<div class="t" id="t43" style="top:380.22px;font-size:11.2px;line-height:11.2px;color:#474747;left:1072.5px;letter-spacing:-0.258px;">Square Neck Tee</div>
<div class="t" id="t44" style="top:380.22px;font-size:11.2px;line-height:11.2px;color:#444;right:584.3px;letter-spacing:-0.719px;margin-right:0.719px;">16%</div>
<div class="abs" style="left:1363.7px;top:383.5px;width:1.3px;height:4.8px;background:#1d4f91;"></div>
<div class="abs" style="left:1480.7px;top:382.0px;width:1.5px;height:8px;background:#2fb3bd;"></div>
<div class="abs" style="left:1058px;top:399px;width:438px;height:27px;background:#f8f8f8;"></div>
<div class="abs" style="left:1058px;top:425px;width:438px;height:1px;background:#e8e8e8;"></div>
<div class="t" id="t45" style="top:407.22px;font-size:11.2px;line-height:11.2px;color:#474747;left:1072.5px;letter-spacing:-0.165px;">Grey Vintage Shirt</div>
<div class="t" id="t46" style="top:407.22px;font-size:11.2px;line-height:11.2px;color:#444;right:584.3px;letter-spacing:-0.719px;margin-right:0.719px;">31%</div>
<div class="abs" style="left:1363.7px;top:410.5px;width:1.3px;height:4.8px;background:#1d4f91;"></div>
<div class="abs" style="left:1480.7px;top:409.0px;width:1.5px;height:8px;background:#2fb3bd;"></div>
<div class="abs" style="left:1058px;top:452px;width:438px;height:1px;background:#e8e8e8;"></div>
<div class="t" id="t47" style="top:434.22px;font-size:11.2px;line-height:11.2px;color:#474747;left:1072.5px;letter-spacing:-0.205px;">Simple Necklace</div>
<div class="t" id="t48" style="top:434.22px;font-size:11.2px;line-height:11.2px;color:#444;right:584.3px;letter-spacing:-0.719px;margin-right:0.719px;">55%</div>
<div class="abs" style="left:1363.7px;top:437.5px;width:1.3px;height:4.8px;background:#1d4f91;"></div>
<div class="abs" style="left:1480.7px;top:436.0px;width:1.5px;height:8px;background:#2fb3bd;"></div>
<div class="abs" style="left:1058px;top:453px;width:438px;height:27px;background:#f8f8f8;"></div>
<div class="abs" style="left:1058px;top:479px;width:438px;height:1px;background:#e8e8e8;"></div>
<div class="t" id="t49" style="top:461.22px;font-size:11.2px;line-height:11.2px;color:#474747;left:1072.5px;letter-spacing:-0.131px;">Simple Black Hoodie</div>
<div class="t" id="t50" style="top:461.22px;font-size:11.2px;line-height:11.2px;color:#444;right:584.3px;letter-spacing:-0.719px;margin-right:0.719px;">66%</div>
<div class="abs" style="left:1363.7px;top:464.5px;width:1.3px;height:4.8px;background:#1d4f91;"></div>
<div class="abs" style="left:1480.7px;top:463.0px;width:1.5px;height:8px;background:#2fb3bd;"></div>
<div class="abs" style="left:1058px;top:506px;width:438px;height:1px;background:#e8e8e8;"></div>
<div class="t" id="t51" style="top:488.22px;font-size:11.2px;line-height:11.2px;color:#474747;left:1072.5px;letter-spacing:-0.114px;">Blue Lily Top</div>
<div class="t" id="t52" style="top:488.22px;font-size:11.2px;line-height:11.2px;color:#444;right:584.3px;letter-spacing:-0.719px;margin-right:0.719px;">68%</div>
<div class="abs" style="left:1363.7px;top:491.5px;width:1.3px;height:4.8px;background:#1d4f91;"></div>
<div class="abs" style="left:1480.7px;top:490.0px;width:1.5px;height:8px;background:#2fb3bd;"></div>
<div class="abs" style="left:1058px;top:507px;width:438px;height:22px;background:#f8f8f8;"></div>
<div class="t" id="t53" style="top:515.22px;font-size:11.2px;line-height:11.2px;color:#474747;left:1072.5px;letter-spacing:-0.225px;">Next Gen Tee</div>
<div class="t" id="t54" style="top:515.22px;font-size:11.2px;line-height:11.2px;color:#444;right:584.3px;letter-spacing:-0.594px;margin-right:0.594px;">445%</div>
<div class="abs" style="left:1363.7px;top:518.5px;width:1.3px;height:4.8px;background:#1d4f91;"></div>
<div class="abs" style="left:1480.7px;top:517.0px;width:1.5px;height:8px;background:#2fb3bd;"></div>
<div class="t" id="t55" style="top:549.69px;font-size:13.6px;line-height:13.6px;-webkit-text-stroke:0.3px currentColor;color:#2b5b9c;left:48.7px;letter-spacing:0.267px;">Pricelist</div>
<div class="t" id="t56" style="top:578.88px;font-size:11.6px;line-height:11.6px;-webkit-text-stroke:0.3px currentColor;color:#333;left:49.7px;letter-spacing:-0.067px;">Product Name</div>
<div class="t" id="t57" style="top:578.88px;font-size:11.6px;line-height:11.6px;-webkit-text-stroke:0.3px currentColor;color:#333;left:263.7px;letter-spacing:-0.356px;">Product SKU</div>
<div class="t" id="t58" style="top:578.88px;font-size:11.6px;line-height:11.6px;-webkit-text-stroke:0.3px currentColor;color:#333;right:1329px;letter-spacing:-0.114px;margin-right:0.114px;">Product List Price</div>
<div class="abs" style="left:35px;top:599px;width:570px;height:1px;background:#9a9a9a;"></div>
<div class="t" id="t59" style="top:608.02px;font-size:11.2px;line-height:11.2px;color:#474747;left:49.7px;letter-spacing:0.086px;">Butterfly Top</div>
<div class="t" id="t60" style="top:608.02px;font-size:11.2px;line-height:11.2px;color:#474747;left:263.7px;letter-spacing:-0.595px;">SKUA4666</div>
<div class="t" id="t61" style="top:608.02px;font-size:11.2px;line-height:11.2px;color:#474747;right:1329px;letter-spacing:-0.293px;margin-right:0.293px;">$206.91</div>
<div class="abs" style="left:35px;top:628.4px;width:570px;height:1px;background:#e6e6e6;"></div>
<div class="t" id="t62" style="top:636.32px;font-size:11.2px;line-height:11.2px;color:#474747;left:49.7px;letter-spacing:-0.413px;">GZ Sneaker</div>
<div class="t" id="t63" style="top:636.32px;font-size:11.2px;line-height:11.2px;color:#474747;left:263.7px;letter-spacing:-0.595px;">SKUA4653</div>
<div class="t" id="t64" style="top:636.32px;font-size:11.2px;line-height:11.2px;color:#474747;right:1329px;letter-spacing:-0.286px;margin-right:0.286px;">$69.99</div>
<div class="abs" style="left:35px;top:656.6px;width:570px;height:1px;background:#e6e6e6;"></div>
<div class="t" id="t65" style="top:664.92px;font-size:11.2px;line-height:11.2px;color:#474747;left:49.7px;letter-spacing:-0.078px;">Summer Mini Dress</div>
<div class="t" id="t66" style="top:664.92px;font-size:11.2px;line-height:11.2px;color:#474747;left:263.7px;letter-spacing:-0.595px;">SKUA4664</div>
<div class="t" id="t67" style="top:664.92px;font-size:11.2px;line-height:11.2px;color:#474747;right:1329px;letter-spacing:-0.286px;margin-right:0.286px;">$34.99</div>
<div class="abs" style="left:35px;top:685.3px;width:570px;height:1px;background:#e6e6e6;"></div>
<div class="t" id="t68" style="top:693.92px;font-size:11.2px;line-height:11.2px;color:#474747;left:49.7px;letter-spacing:-0.257px;">Vintage Mom Jeans</div>
<div class="t" id="t69" style="top:693.92px;font-size:11.2px;line-height:11.2px;color:#474747;left:263.7px;letter-spacing:-0.595px;">SKUA4675</div>
<div class="t" id="t70" style="top:693.92px;font-size:11.2px;line-height:11.2px;color:#474747;right:1329px;letter-spacing:-0.293px;margin-right:0.293px;">$258.93</div>
<div class="abs" style="left:35px;top:714.4px;width:570px;height:1px;background:#e6e6e6;"></div>
<div class="t" id="t71" style="top:549.49px;font-size:13.6px;line-height:13.6px;-webkit-text-stroke:0.3px currentColor;color:#2b5b9c;left:630.4px;letter-spacing:0.251px;">Inventory YTD</div>
<div class="abs" style="left:762px;top:572px;width:1px;height:269px;background:#f0f0f0;"></div>
<div class="abs" style="left:834px;top:572px;width:1px;height:269px;background:#f0f0f0;"></div>
<div class="abs" style="left:906px;top:572px;width:1px;height:269px;background:#f0f0f0;"></div>
<div class="abs" style="left:978px;top:572px;width:1px;height:269px;background:#f0f0f0;"></div>
<div class="abs" style="left:1050px;top:572px;width:1px;height:269px;background:#f0f0f0;"></div>
<div class="abs" style="left:1122px;top:572px;width:1px;height:269px;background:#f0f0f0;"></div>
<div class="abs" style="left:1194px;top:572px;width:1px;height:269px;background:#f0f0f0;"></div>
<div class="abs" style="left:1266px;top:572px;width:1px;height:269px;background:#f0f0f0;"></div>
<div class="abs" style="left:1338px;top:572px;width:1px;height:269px;background:#f0f0f0;"></div>
<div class="abs" style="left:689.5px;top:571px;width:1.2px;height:270px;background:#dcdcdc;"></div>
<div class="abs" style="left:690px;top:840.5px;width:728px;height:1px;background:#d4d4d4;"></div>
<div class="t" id="t72" style="top:586.20px;font-size:15px;line-height:15px;color:#444;right:1236.5px;letter-spacing:-0.374px;margin-right:0.374px;">Dress</div>
<div class="abs" style="left:691px;top:582.8px;width:664.7px;height:25.7px;background:#5589cb;"></div>
<div class="t" id="t73" style="top:588.16px;font-size:12.1px;line-height:12.1px;color:#444;left:1358.7px;letter-spacing:-0.046px;">1,852,689</div>
<div class="t" id="t74" style="top:617.90px;font-size:15px;line-height:15px;color:#444;right:1236.5px;letter-spacing:-0.079px;margin-right:0.079px;">Blouse</div>
<div class="abs" style="left:691px;top:614.5px;width:351.7px;height:25.7px;background:#2e74b9;"></div>
<div class="t" id="t75" style="top:619.86px;font-size:12.1px;line-height:12.1px;color:#444;left:1045.7px;letter-spacing:0.026px;">980,396</div>
<div class="t" id="t76" style="top:649.60px;font-size:15px;line-height:15px;color:#444;right:1236.5px;letter-spacing:-0.289px;margin-right:0.289px;">Shoes</div>
<div class="abs" style="left:691px;top:646.1999999999999px;width:113.5px;height:25.7px;background:#5589cb;"></div>
<div class="t" id="t77" style="top:651.56px;font-size:12.1px;line-height:12.1px;color:#444;left:807.5px;letter-spacing:-0.046px;">316,476</div>
<div class="t" id="t78" style="top:681.30px;font-size:15px;line-height:15px;color:#444;right:1236.5px;letter-spacing:-0.212px;margin-right:0.212px;">Pants</div>
<div class="abs" style="left:691px;top:677.9px;width:83.5px;height:25.7px;background:#2e74b9;"></div>
<div class="t" id="t79" style="top:683.26px;font-size:12.1px;line-height:12.1px;color:#444;left:777.5px;letter-spacing:-0.046px;">232,687</div>
<div class="t" id="t80" style="top:712.80px;font-size:15px;line-height:15px;color:#444;right:1236.5px;letter-spacing:-0.007px;margin-right:0.007px;">Shirts</div>
<div class="abs" style="left:690.5px;top:709.9px;width:2.5px;height:25px;background:#e3e3e3;"></div>
<div class="t" id="t81" style="top:714.76px;font-size:12.1px;line-height:12.1px;color:#444;left:693.8px;letter-spacing:-0.073px;">2,166</div>
<div class="t" id="t82" style="top:744.30px;font-size:15px;line-height:15px;color:#444;right:1236.5px;letter-spacing:-0.000px;margin-right:0.000px;">Necklace</div>
<div class="abs" style="left:690.5px;top:741.4px;width:2.5px;height:25px;background:#e3e3e3;"></div>
<div class="t" id="t83" style="top:746.26px;font-size:12.1px;line-height:12.1px;color:#444;left:693.8px;letter-spacing:-0.096px;">287</div>
<div class="t" id="t84" style="top:776.10px;font-size:15px;line-height:15px;color:#444;right:1236.5px;letter-spacing:0.326px;margin-right:-0.326px;">Hoodie</div>
<div class="abs" style="left:690.5px;top:773.1999999999999px;width:2.5px;height:25px;background:#e3e3e3;"></div>
<div class="t" id="t85" style="top:778.06px;font-size:12.1px;line-height:12.1px;color:#444;left:693.8px;letter-spacing:-0.096px;">212</div>
<div class="t" id="t86" style="top:807.30px;font-size:15px;line-height:15px;color:#444;right:1236.5px;letter-spacing:-0.118px;margin-right:0.118px;">Swim</div>
<div class="abs" style="left:690.5px;top:804.4px;width:2.5px;height:25px;background:#e3e3e3;"></div>
<div class="t" id="t87" style="top:809.26px;font-size:12.1px;line-height:12.1px;color:#444;left:693.8px;letter-spacing:-0.096px;">123</div>
<div class="t" id="t88" style="top:848.61px;font-size:14.4px;line-height:14.4px;color:#555;left:834.5px;transform:translateX(-50%);letter-spacing:0.023px;margin-left:0.011px;">400K</div>
<div class="t" id="t89" style="top:848.61px;font-size:14.4px;line-height:14.4px;color:#555;left:978.5px;transform:translateX(-50%);letter-spacing:0.223px;margin-left:0.111px;">800K</div>
<div class="t" id="t90" style="top:848.61px;font-size:14.4px;line-height:14.4px;color:#555;left:1121.5px;transform:translateX(-50%);letter-spacing:0.575px;margin-left:0.287px;">1.2M</div>
<div class="t" id="t91" style="top:848.61px;font-size:14.4px;line-height:14.4px;color:#555;left:1265.5px;transform:translateX(-50%);letter-spacing:0.575px;margin-left:0.287px;">1.6M</div>
<div class="t" id="t92" style="top:657.77px;font-size:10.9px;line-height:10.9px;color:#555;left:1435.2px;letter-spacing:-0.010px;">Percentage</div>
<div class="t" id="t93" style="top:674.77px;font-size:10.9px;line-height:10.9px;color:#555;left:1435.2px;letter-spacing:0.083px;">of Produc...</div>
<div class="abs" style="left:1436px;top:698px;width:10px;height:10px;background:#cfdde8;"></div>
<div class="t" id="t94" style="top:697.77px;font-size:10.9px;line-height:10.9px;color:#555;left:1454.6px;letter-spacing:-0.350px;">0% - ...</div>
<div class="abs" style="left:1436px;top:720px;width:10px;height:10px;background:#a4c7e5;"></div>
<div class="t" id="t95" style="top:719.77px;font-size:10.9px;line-height:10.9px;color:#555;left:1454.6px;letter-spacing:-0.266px;">20% -...</div>
<div class="abs" style="left:1436px;top:742px;width:10px;height:10px;background:#7ba8d9;"></div>
<div class="t" id="t96" style="top:741.77px;font-size:10.9px;line-height:10.9px;color:#555;left:1454.6px;letter-spacing:-0.266px;">40% -...</div>
<div class="abs" style="left:1436px;top:764px;width:10px;height:10px;background:#5287cb;"></div>
<div class="t" id="t97" style="top:763.77px;font-size:10.9px;line-height:10.9px;color:#555;left:1454.6px;letter-spacing:-0.266px;">60% -...</div>
<div class="abs" style="left:1436px;top:786px;width:10px;height:10px;background:#2e6fb5;"></div>
<div class="t" id="t98" style="top:785.77px;font-size:10.9px;line-height:10.9px;color:#555;left:1454.6px;letter-spacing:-0.266px;">80% -...</div>
<!--/CARDS-->

<div id="rp">
<div class="t" style="left:16px;top:14.5px;font-size:16.3px;line-height:17px;color:#252a38;-webkit-text-stroke:0.35px #252a38">Auto Answers</div>
<div class="t" style="left:247px;top:16px;font-size:13px;line-height:14px;color:#555">?</div>
<svg class="abs" style="left:273px;top:17px" width="14" height="14" viewBox="0 0 14 14" fill="none" stroke="#c9ccd2" stroke-width="1"><path d="M8 2.5l3.5 3.5-5 5H4.5l-2-2z M5.3 5.3l3.5 3.5"/><path d="M7.5 11h1M9.5 11h1" stroke-width="0.8"/></svg>
<svg class="abs" style="left:300px;top:16px" width="14" height="14" viewBox="0 0 14 14"><path d="M8.6 1.5 L12.5 5.4 L11.3 6 L9.4 8.8 L9.9 10.8 L8.9 11.6 L2.4 5.1 L3.2 4.1 L5.2 4.6 L8 2.7 Z" fill="#2a3142"/><path d="M5.4 8.6 L1.6 12.4" stroke="#2a3142" stroke-width="1.3"/><path d="M1.5 1.5 L12.5 12.5" stroke="#fff" stroke-width="1.6"/><path d="M2.2 2.2 L12 12" stroke="#2a3142" stroke-width="0.9"/></svg>
<svg class="abs" style="left:330px;top:18px" width="11" height="11" viewBox="0 0 11 11" fill="none" stroke="#2a3142" stroke-width="1"><path d="M6.5 1h3.5v3.5M10 1L6.6 4.4M4.5 10H1V6.5M1 10l3.4-3.4"/></svg>
<svg class="abs" style="left:357px;top:18px" width="12" height="12" viewBox="0 0 12 12" fill="none" stroke="#2a3142" stroke-width="1.2"><path d="M1.3 1.3l9.5 9.5M10.8 1.3l-9.5 9.5"/></svg>

<!-- robot -->
<svg class="abs" style="left:156px;top:220px" width="70" height="108" viewBox="0 0 70 108">
  <defs>
    <linearGradient id="rfront" x1="0" y1="0" x2="0" y2="1"><stop offset="0" stop-color="#fbfbfb"/><stop offset="0.55" stop-color="#f6f6f6"/><stop offset="1" stop-color="#dcdcde"/></linearGradient>
    <linearGradient id="rside" x1="0" y1="0" x2="1" y2="0"><stop offset="0" stop-color="#f0f0f1"/><stop offset="1" stop-color="#b9b9bd"/></linearGradient>
  </defs>
  <ellipse cx="38.6" cy="6.2" rx="6" ry="3" fill="#e6436b"/>
  <path d="M45 8 L57 10.5 Q62 12 63.5 16 L61 82 L55 86 L47 86 Z" fill="url(#rside)"/>
  <path d="M8 5.6 L47 7.8 Q49 8 49 10 L48 86 L3.5 88 Q3 88 3 86 L4.5 9 Q5 5.6 8 5.6 Z" fill="url(#rfront)"/>
  <path d="M6 7 L8 6.5 L8 30 L6 30Z" fill="#e8e8ea" opacity="0.8"/>
  <path d="M12.5 14.7 L44 16.8 Q46.7 17 46.7 19.6 L46.5 32.3 Q46.5 35 43.8 34.8 L12.3 33 Q9.8 32.8 9.8 30.3 L9.8 17.3 Q9.8 14.6 12.5 14.7 Z" fill="#262a38"/>
  <rect x="17" y="20.5" width="3.8" height="7.8" rx="0.5" fill="#2ec6cf"/>
  <rect x="35.9" y="21.8" width="4" height="7.6" rx="0.5" fill="#2ec6cf"/>
  <path d="M3.5 85 L3.5 93 Q4 97.5 9 98.6 L40 104.2 Q44 104.8 47 102.2 L57.7 90.5 L57.7 82 L48 86 Z" fill="#141416"/>
  <path d="M15.5 81.5 L34 83.5 Q35.8 83.8 35.8 85.5 L35.8 89.5 L13.7 87.5 L13.7 83.2 Q13.7 81.3 15.5 81.5 Z" fill="#222226"/>
  <path d="M17 86 h2 M21 86.3 h2 M25 86.6 h2 M29 86.9 h2" stroke="#666" stroke-width="0.6"/>
</svg>
<div class="abs" style="left:16px;top:370.5px;width:348px;text-align:center;font-size:13.85px;line-height:20px;color:#555a62">You can ask questions about this page and<br>its related data. Click on a specific<br>visualization to narrow down your inquiries.</div>

<svg class="abs" style="left:155px;top:592px" width="10" height="7" viewBox="0 0 10 7" fill="none" stroke="#666" stroke-width="1.1"><path d="M1 1.5l4 4 4-4"/></svg>
<div class="t" style="left:175px;top:589px;font-size:12.5px;line-height:13px;color:#555">I think you may be looking for...</div>
<svg class="abs" style="left:349px;top:590px" width="12" height="12" viewBox="0 0 12 12" fill="none" stroke="#555" stroke-width="1.1"><path d="M2 5V3h7.5M8 1.5l1.8 1.5L8 4.5M10 7v2H2.5M4 10.5L2.2 9 4 7.5"/></svg>

<div class="abs" style="left:101.5px;top:612.5px;width:261px;height:28px;border:1px solid #8db5f2;border-radius:4px;background:#fff"></div>
<div class="t" style="left:106.5px;top:620px;font-size:14.2px;line-height:15px;color:#525252;-webkit-text-stroke:0.2px #525252">What is the total sales for each quarter?</div>
<div class="abs" style="left:15.5px;top:651.5px;width:346px;height:47px;border:1px solid #8db5f2;border-radius:4px;background:#fff"></div>
<div class="t" style="left:21px;top:659px;font-size:14.2px;line-height:19px;color:#525252;-webkit-text-stroke:0.2px #525252">Which product has the maximum inventory<br>capacity?</div>
<div class="abs" style="left:110px;top:709.5px;width:252px;height:28px;border:1px solid #8db5f2;border-radius:4px;background:#fff"></div>
<div class="t" style="left:116px;top:717px;font-size:14.2px;line-height:15px;color:#525252;-webkit-text-stroke:0.2px #525252">Show me the list of all product names.</div>

<div class="abs" style="left:16px;top:753.5px;width:347.5px;height:90px;border:1px solid #cfd1d5;border-radius:9px;background:#f1f2f4"></div>
<div class="t" style="left:29.5px;top:767px;font-size:13.9px;line-height:15px;color:#555">Ask me a question. (Questions remaining: 74)</div>
<svg class="abs" style="left:329px;top:814px" width="22" height="22" viewBox="0 0 22 22"><path d="M1 11.5 L21 1.5 L16 20 L10.5 15.5 L8 20 L7.5 14 Z" fill="#c3c6cc"/><path d="M7.5 14 L21 1.5 L10.5 15.5" fill="#b2b5bb"/></svg>

</div>
</body></html>
